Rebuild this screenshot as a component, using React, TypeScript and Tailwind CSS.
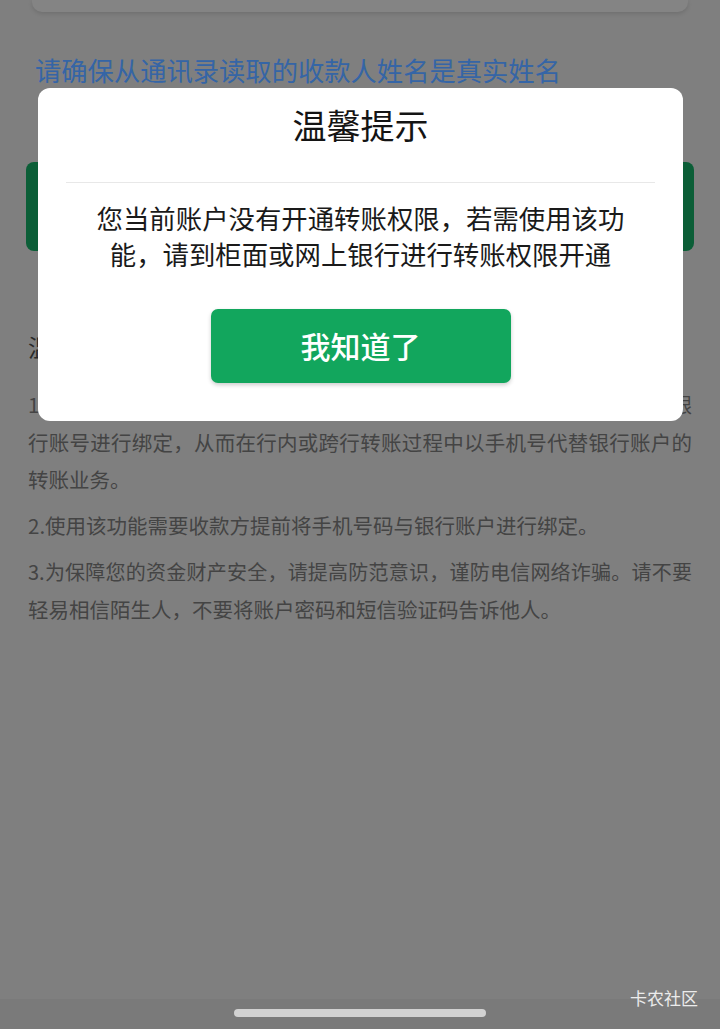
import React from "react";

const FONT = { fontFamily: '"Noto Sans CJK SC", "Noto Sans", sans-serif' };

function Line({
  children,
  full = true,
  extra = "",
}: {
  children: React.ReactNode;
  full?: boolean;
  extra?: string;
}) {
  return (
    <div className={(full ? "text-justify [text-align-last:justify] " : "text-left ") + extra}>
      {children}
    </div>
  );
}

export default function App() {
  return (
    <div
      className="relative w-[720px] h-[1029px] overflow-hidden bg-[#7f7f7f]"
      style={FONT}
    >
      {/* underlying page (dimmed) */}
      <div className="flex flex-col">
        <div className="mx-[32px] h-[12px] rounded-b-[10px] bg-[#848484] shadow-[0_2px_4px_rgba(0,0,0,0.12)]" />
        <div className="mt-[40px] ml-[35px] text-[26.3px] leading-[36px] text-[#3565a6]">
          请确保从通讯录读取的收款人姓名是真实姓名
        </div>
        <div className="mt-[74px] mx-[26px] h-[89px] rounded-[8px] bg-[#0b5e37]" />
        <div className="mt-[80px] ml-[28px] text-[24px] leading-[32px] text-[#2a2a2a]">
          温馨提示
        </div>
        <div className="mt-[23px] px-[28px] text-[20.5px] leading-[37.5px] text-[#444444]">
          <Line>1.手机号转账服务是指客户可以将本人手机号码与本人在我行开立的银</Line>
          <Line>行账号进行绑定，从而在行内或跨行转账过程中以手机号代替银行账户的</Line>
          <Line full={false}>转账业务。</Line>
        </div>
        <div className="mt-[8px] px-[28px] text-[20.5px] leading-[37.5px] text-[#444444]">
          <Line full={false}>2.使用该功能需要收款方提前将手机号码与银行账户进行绑定。</Line>
        </div>
        <div className="mt-[9px] px-[28px] text-[20.5px] leading-[37.5px] text-[#444444]">
          <Line extra="text-[20px]">
            3.为保障您的资金财产安全，请提高防范意识，谨防电信网络诈骗。请不要
          </Line>
          <Line full={false}>轻易相信陌生人，不要将账户密码和短信验证码告诉他人。</Line>
        </div>
      </div>

      {/* system nav bar */}
      <div className="absolute left-0 right-0 bottom-0 h-[30px] bg-[#7a7a7a] flex justify-center">
        <div className="mt-[10px] w-[252px] h-[8px] rounded-full bg-[#d2d2d2]" />
      </div>
      <div className="absolute right-[22px] top-[986px] text-[17px] leading-[24px] text-[#ececec]">
        卡农社区
      </div>

      {/* modal */}
      <div className="absolute left-[38px] top-[88px] w-[645px] h-[333px] rounded-[12px] bg-white flex flex-col">
        <div className="pt-[15px] text-center text-[34px] leading-[44px] text-[#141414]">温馨提示</div>
        <div className="mt-[35px] mx-[28px] h-px bg-[#e8e8e8]" />
        <div className="mt-[16.5px] text-center text-[26.4px] leading-[36px] text-[#1a1a1a]">
          <div>您当前账户没有开通转账权限，若需使用该功</div>
          <div>能，请到柜面或网上银行进行转账权限开通</div>
        </div>
        <div className="mt-[37px] flex justify-center">
          <div className="w-[300px] h-[74px] rounded-[7px] bg-[#12a65d] shadow-[0_2px_4px_rgba(0,0,0,0.2)] flex items-center justify-center text-white text-[30px] font-medium">
            我知道了
          </div>
        </div>
      </div>
    </div>
  );
}
